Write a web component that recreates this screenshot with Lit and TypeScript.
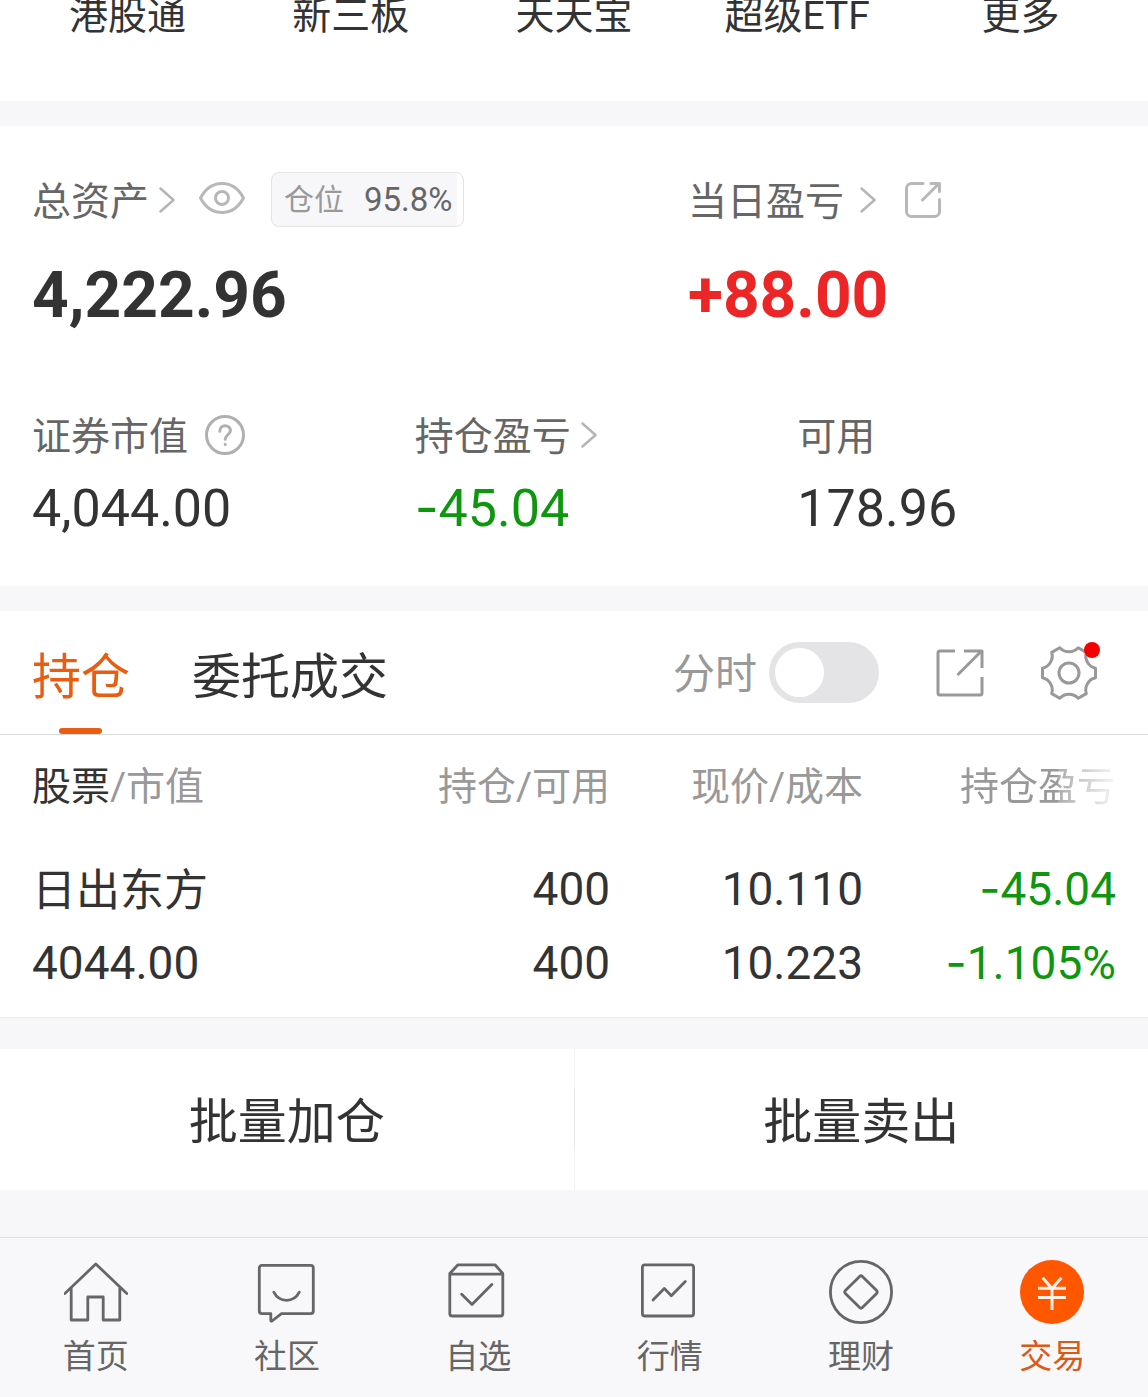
import { LitElement, html, css, svg, TemplateResult, SVGTemplateResult } from "lit";
import { customElement, state } from "lit/decorators.js";
import { classMap } from "lit/directives/class-map.js";

interface Holding {
  name: string;
  marketValue: string;
  held: string;
  available: string;
  price: string;
  cost: string;
  profit: string;
  profitRate: string;
}

interface NavItem {
  label: string;
  icon: SVGTemplateResult;
}

const shortcuts = ["港股通", "新三板", "天天宝", "超级ETF", "更多"];

const holdings: Holding[] = [
  {
    name: "日出东方",
    marketValue: "4044.00",
    held: "400",
    available: "400",
    price: "10.110",
    cost: "10.223",
    profit: "-45.04",
    profitRate: "-1.105%",
  },
];

const navItems: NavItem[] = [
  {
    label: "首页",
    icon: svg`<path d="M0.8 33.6L31.8 4l31 29.6M7.2 28v32h16.6V37h15.4v23h16.6V28"/>`,
  },
  {
    label: "社区",
    icon: svg`<path d="M6.800 5.400h49a2.500 2.500 0 0 1 2.500 2.500v43.200a2.500 2.500 0 0 1-2.500 2.500H26.500l-9.500 7.400q-1.200 0.600-1.200-0.800v-6.600H6.800a2.500 2.500 0 0 1-2.500-2.500V7.900a2.500 2.500 0 0 1 2.500-2.500z"/><path d="M18.800 32.200c5.500 10.800 20 10.800 25.500 0"/>`,
  },
  {
    label: "自选",
    icon: svg`<path d="M3.800 13.500L12 4.800h37l7.800 8.700v40a2.500 2.500 0 0 1-2.500 2.500h-48a2.500 2.500 0 0 1-2.500-2.500zM3.800 14.200h53M15.700 34.300L26 44.600l19.800-20.200"/>`,
  },
  {
    label: "行情",
    icon: svg`<rect x="4.400" y="4.800" width="51.200" height="51.200" rx="2.500"/><path d="M15 40l11.300-11.600 7 7.300 14-14.200"/>`,
  },
  {
    label: "理财",
    icon: svg`<circle cx="32" cy="32" r="30.600"/><path d="M30.600 16.400q1.400-1.400 2.800 0l14.200 14.200q1.400 1.400 0 2.800L33.400 47.600q-1.400 1.400-2.800 0L16.400 33.400q-1.400-1.400 0-2.800z"/>`,
  },
  {
    label: "交易",
    icon: svg`<circle cx="32" cy="32" r="32" fill="#ff5600" stroke="none"/><path stroke="#fff0e6" stroke-width="3" stroke-linecap="butt" d="M22.600 17.800L32 28.500l9.400-10.700M18 28.300h28M18 37.400h28M32 28.500v21.500"/>`,
  },
];

const chevron = html`<svg class="chevron" viewBox="0 0 16 26" aria-hidden="true">
  <path d="M1.500 1.500L14.500 13 1.500 24.500" />
</svg>`;

// The sign is set apart because it has a wider dash than the digits' own face.
const amount = (text: string): TemplateResult =>
  text.startsWith("-")
    ? html`<span class="sign">-</span>${text.slice(1)}`
    : html`${text}`;

@customElement("app-root")
export class AppRoot extends LitElement {
  @state() private tab = 0;
  @state() private page = 5;

  static styles = css`
    :host {
      display: block;
      background: #f7f7fa;
      color: #333;
      font-family: Roboto, "Noto Sans CJK SC", sans-serif;
      font-size: 39px;
    }
    * {
      box-sizing: border-box;
    }
    button,
    a {
      margin: 0;
      padding: 0;
      border: 0;
      background: none;
      color: inherit;
      font: inherit;
      text-decoration: none;
      cursor: pointer;
    }
    svg {
      display: block;
      flex: none;
      fill: none;
      stroke: currentColor;
      stroke-linecap: round;
      stroke-linejoin: round;
    }
    .text {
      padding-top: 4px;
    }
    .sign {
      font-family: Inter, sans-serif;
      line-height: 0;
    }
    .down {
      color: #0f960f;
    }

    .shortcuts {
      display: grid;
      grid-template-columns: repeat(5, 1fr);
      padding: 0 16px 69px;
      background: #fff;
      line-height: 32px;
      text-align: center;
    }

    .assets {
      margin-top: 25px;
      padding: 46px 0 47px;
      background: #fff;
    }
    .totals {
      display: grid;
      grid-template-columns: 4fr 3fr;
    }
    .parts {
      display: grid;
      grid-template-columns: repeat(3, 1fr);
      margin-top: 73px;
    }
    .cell {
      padding-left: 32px;
    }
    .caption {
      display: flex;
      align-items: center;
      height: 55px;
      color: #666;
      line-height: 50px;
      white-space: nowrap;
    }
    .link {
      display: flex;
      align-items: center;
      gap: 10px;
    }
    .link.wide {
      gap: 16px;
    }
    .chevron {
      width: 16px;
      height: 26px;
      color: #b5b5b5;
      stroke-width: 2.5;
    }
    .eye {
      width: 46px;
      height: 36px;
      margin-left: 24px;
      color: #b8b8b8;
      stroke-width: 3;
    }
    .badge {
      display: flex;
      align-items: center;
      gap: 20px;
      height: 55px;
      margin-left: 26px;
      padding: 0 10px 0 12px;
      border: 1px solid #e3e3e6;
      border-radius: 8px;
      background: linear-gradient(to left, #fff 6px, #f7f7fa 6px);
      color: #999;
      font-size: 30px;
    }
    .ratio {
      color: #666;
      font-size: 33px;
    }
    .share {
      width: 36px;
      height: 36px;
      margin-left: 29px;
      color: #b8b8b8;
      stroke-width: 3;
    }
    .help {
      width: 40px;
      height: 40px;
      margin-left: 17px;
      color: #b0b0b0;
      stroke-width: 3;
    }
    .total {
      margin-top: 31px;
      font-size: 64px;
      font-weight: 700;
      line-height: 76px;
    }
    .up {
      color: #ec2626;
    }
    .part {
      margin-top: 17px;
      font-size: 52px;
      line-height: 60px;
    }

    .positions {
      margin-top: 25px;
      background: #fff;
      border-bottom: 1px solid #ebebed;
    }
    .bar {
      display: flex;
      align-items: stretch;
      height: 124px;
      padding: 0 51px 0 32px;
      border-bottom: 1px solid #dedede;
    }
    .tabs {
      display: flex;
      gap: 62px;
      margin-right: auto;
    }
    .tab {
      position: relative;
      font-size: 49px;
      white-space: nowrap;
    }
    .tab.active {
      color: #e85d10;
    }
    .tab.active::after {
      content: "";
      position: absolute;
      left: 50%;
      bottom: 0;
      width: 43px;
      height: 6px;
      margin-left: -22px;
      border-radius: 3px;
      background: #e85d10;
    }
    .tools {
      display: flex;
      align-items: center;
      gap: 57px;
      color: #999;
    }
    .switch {
      display: flex;
      align-items: center;
      gap: 12px;
      font-size: 42px;
      line-height: 56px;
      white-space: nowrap;
    }
    .switch input {
      appearance: none;
      display: flex;
      align-items: center;
      width: 110px;
      height: 61px;
      margin: 0;
      padding: 6px;
      border-radius: 31px;
      background: #e4e4e6;
      cursor: pointer;
    }
    .switch input::before {
      content: "";
      width: 49px;
      height: 49px;
      border-radius: 50%;
      background: #fff;
    }
    .switch input:checked {
      justify-content: flex-end;
      background: #e85d10;
    }
    .export {
      width: 48px;
      height: 48px;
      stroke-width: 3;
    }
    .settings {
      position: relative;
    }
    .gear {
      width: 56px;
      height: 56px;
      stroke-width: 3;
    }
    .dot {
      position: absolute;
      top: -3px;
      right: -3px;
      width: 16px;
      height: 16px;
      border-radius: 50%;
      background: #f50000;
    }

    .sheet {
      padding: 0 32px;
    }
    table {
      width: 100%;
      border-collapse: collapse;
      table-layout: fixed;
      font-size: 46px;
      line-height: 74px;
      white-space: nowrap;
    }
    th,
    td {
      padding: 0;
      font-weight: 400;
      text-align: right;
    }
    th {
      height: 100px;
      padding-top: 4px;
      color: #999;
      font-size: 39px;
    }
    th:first-child,
    td:first-child {
      width: 30%;
      text-align: left;
    }
    th .strong {
      color: #333;
    }
    th .fade {
      mask-image: linear-gradient(
        to right,
        #000 63%,
        rgba(0, 0, 0, 0.8) 63%,
        rgba(0, 0, 0, 0.08) 100%
      );
    }
    td {
      padding: 17px 0;
    }
    td div {
      height: 74px;
    }
    .name {
      padding-top: 2px;
      font-size: 44px;
    }

    .batch {
      display: grid;
      grid-template-columns: 1fr 1px 1fr;
      margin-top: 31px;
      background: #fff;
      font-size: 49px;
      line-height: 135px;
    }
    .batch button {
      padding-top: 6px;
    }
    .rule {
      background: linear-gradient(#f4f4f6 28%, #e8e8ea 28% 71%, #f4f4f6 71%);
    }

    .nav {
      display: grid;
      grid-template-columns: repeat(6, 1fr);
      margin-top: 47px;
      padding: 22px 0 20px;
      border-top: 1px solid #e0e0e2;
      background: #f8f8fb;
      color: #666;
      font-size: 33px;
      line-height: 40px;
    }
    .nav a {
      display: flex;
      flex-direction: column;
      align-items: center;
      gap: 13px;
    }
    .nav svg {
      width: 64px;
      height: 64px;
      stroke-width: 2.8;
    }
    .nav .active {
      color: #d95b16;
    }
  `;

  private renderAssets() {
    return html`<section class="assets">
      <div class="totals">
        <div class="cell">
          <div class="caption">
            <button class="link"><span class="text">总资产</span>${chevron}</button>
            <button aria-label="隐藏金额">
              <svg class="eye" viewBox="0 0 46 36" aria-hidden="true">
                <path d="M1.500 16C6 7.500 13.500 1.500 23 1.500S40 7.500 44.500 16C40 24.500 32.500 30.500 23 30.500S6 24.500 1.500 16z" />
                <circle cx="23" cy="16" r="6.500" />
              </svg>
            </button>
            <span class="badge">仓位<span class="ratio">95.8%</span></span>
          </div>
          <div class="total">4,222.96</div>
        </div>
        <div class="cell">
          <div class="caption">
            <button class="link wide"><span class="text">当日盈亏</span>${chevron}</button>
            <button aria-label="分享">
              <svg class="share" viewBox="0 0 36 36" aria-hidden="true">
                <path d="M18 1.500H6.500a5 5 0 0 0-5 5v23a5 5 0 0 0 5 5h23a5 5 0 0 0 5-5V17.500M17.500 18L34 1.500M26 1.500h8.500v8" />
              </svg>
            </button>
          </div>
          <div class="total up">+88.00</div>
        </div>
      </div>
      <div class="parts">
        <div class="cell">
          <div class="caption">
            <span class="text">证券市值</span>
            <button aria-label="说明">
              <svg class="help" viewBox="0 0 40 40" aria-hidden="true">
                <circle cx="20" cy="20" r="18.500" />
                <path d="M14.800 16.200c0-7.200 10.600-7.200 10.600-0.600 0 4.400-5.200 4.200-5.200 8.600" />
                <path d="M20.200 29.200v0.200" />
              </svg>
            </button>
          </div>
          <div class="part">4,044.00</div>
        </div>
        <div class="cell">
          <div class="caption">
            <button class="link"><span class="text">持仓盈亏</span>${chevron}</button>
          </div>
          <div class="part down">${amount("-45.04")}</div>
        </div>
        <div class="cell">
          <div class="caption"><span class="text">可用</span></div>
          <div class="part">178.96</div>
        </div>
      </div>
    </section>`;
  }

  private renderBar() {
    return html`<div class="bar">
      <div class="tabs" role="tablist">
        ${["持仓", "委托成交"].map(
          (label, i) => html`<button
            role="tab"
            aria-selected=${this.tab === i}
            class=${classMap({ tab: true, active: this.tab === i })}
            @click=${() => (this.tab = i)}
          >${label}</button>`
        )}
      </div>
      <div class="tools">
        <label class="switch"><span class="text">分时</span><input type="checkbox" role="switch" /></label>
        <button aria-label="导出">
          <svg class="export" viewBox="0 0 48 48" aria-hidden="true">
            <path stroke-linecap="butt" d="M19 2H4a2 2 0 0 0-2 2v40a2 2 0 0 0 2 2h40a2 2 0 0 0 2-2V28M28 2h18v17M21.500 26L45.500 2" />
          </svg>
        </button>
        <button class="settings" aria-label="设置">
          <svg class="gear" viewBox="0 0 56 56" aria-hidden="true">
            <path d="M54.500 23.300V32.700A12.600 12.600 0 0 0 45.300 48.600L37.200 53.300A12.600 12.600 0 0 0 18.800 53.300L10.700 48.600A12.600 12.600 0 0 0 1.500 32.700V23.300A12.600 12.600 0 0 0 10.700 7.400L18.800 2.700A12.600 12.600 0 0 0 37.200 2.700L45.300 7.400A12.600 12.600 0 0 0 54.500 23.300z" />
            <circle cx="28" cy="28" r="10" />
          </svg>
          <span class="dot"></span>
        </button>
      </div>
    </div>`;
  }

  private renderTable() {
    return html`<div class="sheet">
      <table>
        <thead>
          <tr>
            <th scope="col"><span class="strong">股票</span>/市值</th>
            <th scope="col">持仓/可用</th>
            <th scope="col">现价/成本</th>
            <th scope="col"><span class="fade">持仓盈亏</span></th>
          </tr>
        </thead>
        <tbody>
          ${holdings.map(
            (h) => html`<tr>
              <td>
                <div class="name">${h.name}</div>
                <div>${h.marketValue}</div>
              </td>
              <td>
                <div>${h.held}</div>
                <div>${h.available}</div>
              </td>
              <td>
                <div>${h.price}</div>
                <div>${h.cost}</div>
              </td>
              <td class="down">
                <div>${amount(h.profit)}</div>
                <div>${amount(h.profitRate)}</div>
              </td>
            </tr>`
          )}
        </tbody>
      </table>
    </div>`;
  }

  render() {
    return html`
      <nav class="shortcuts">
        ${shortcuts.map((label) => html`<a href="#">${label}</a>`)}
      </nav>
      ${this.renderAssets()}
      <section class="positions">${this.renderBar()}${this.renderTable()}</section>
      <div class="batch">
        <button>批量加仓</button>
        <span class="rule"></span>
        <button>批量卖出</button>
      </div>
      <nav class="nav">
        ${navItems.map(
          (item, i) => html`<a
            href="#"
            class=${classMap({ active: this.page === i })}
            @click=${(e: Event) => {
              e.preventDefault();
              this.page = i;
            }}
          >
            <svg viewBox="0 0 64 64" aria-hidden="true">${item.icon}</svg>
            <span>${item.label}</span>
          </a>`
        )}
      </nav>
    `;
  }
}
